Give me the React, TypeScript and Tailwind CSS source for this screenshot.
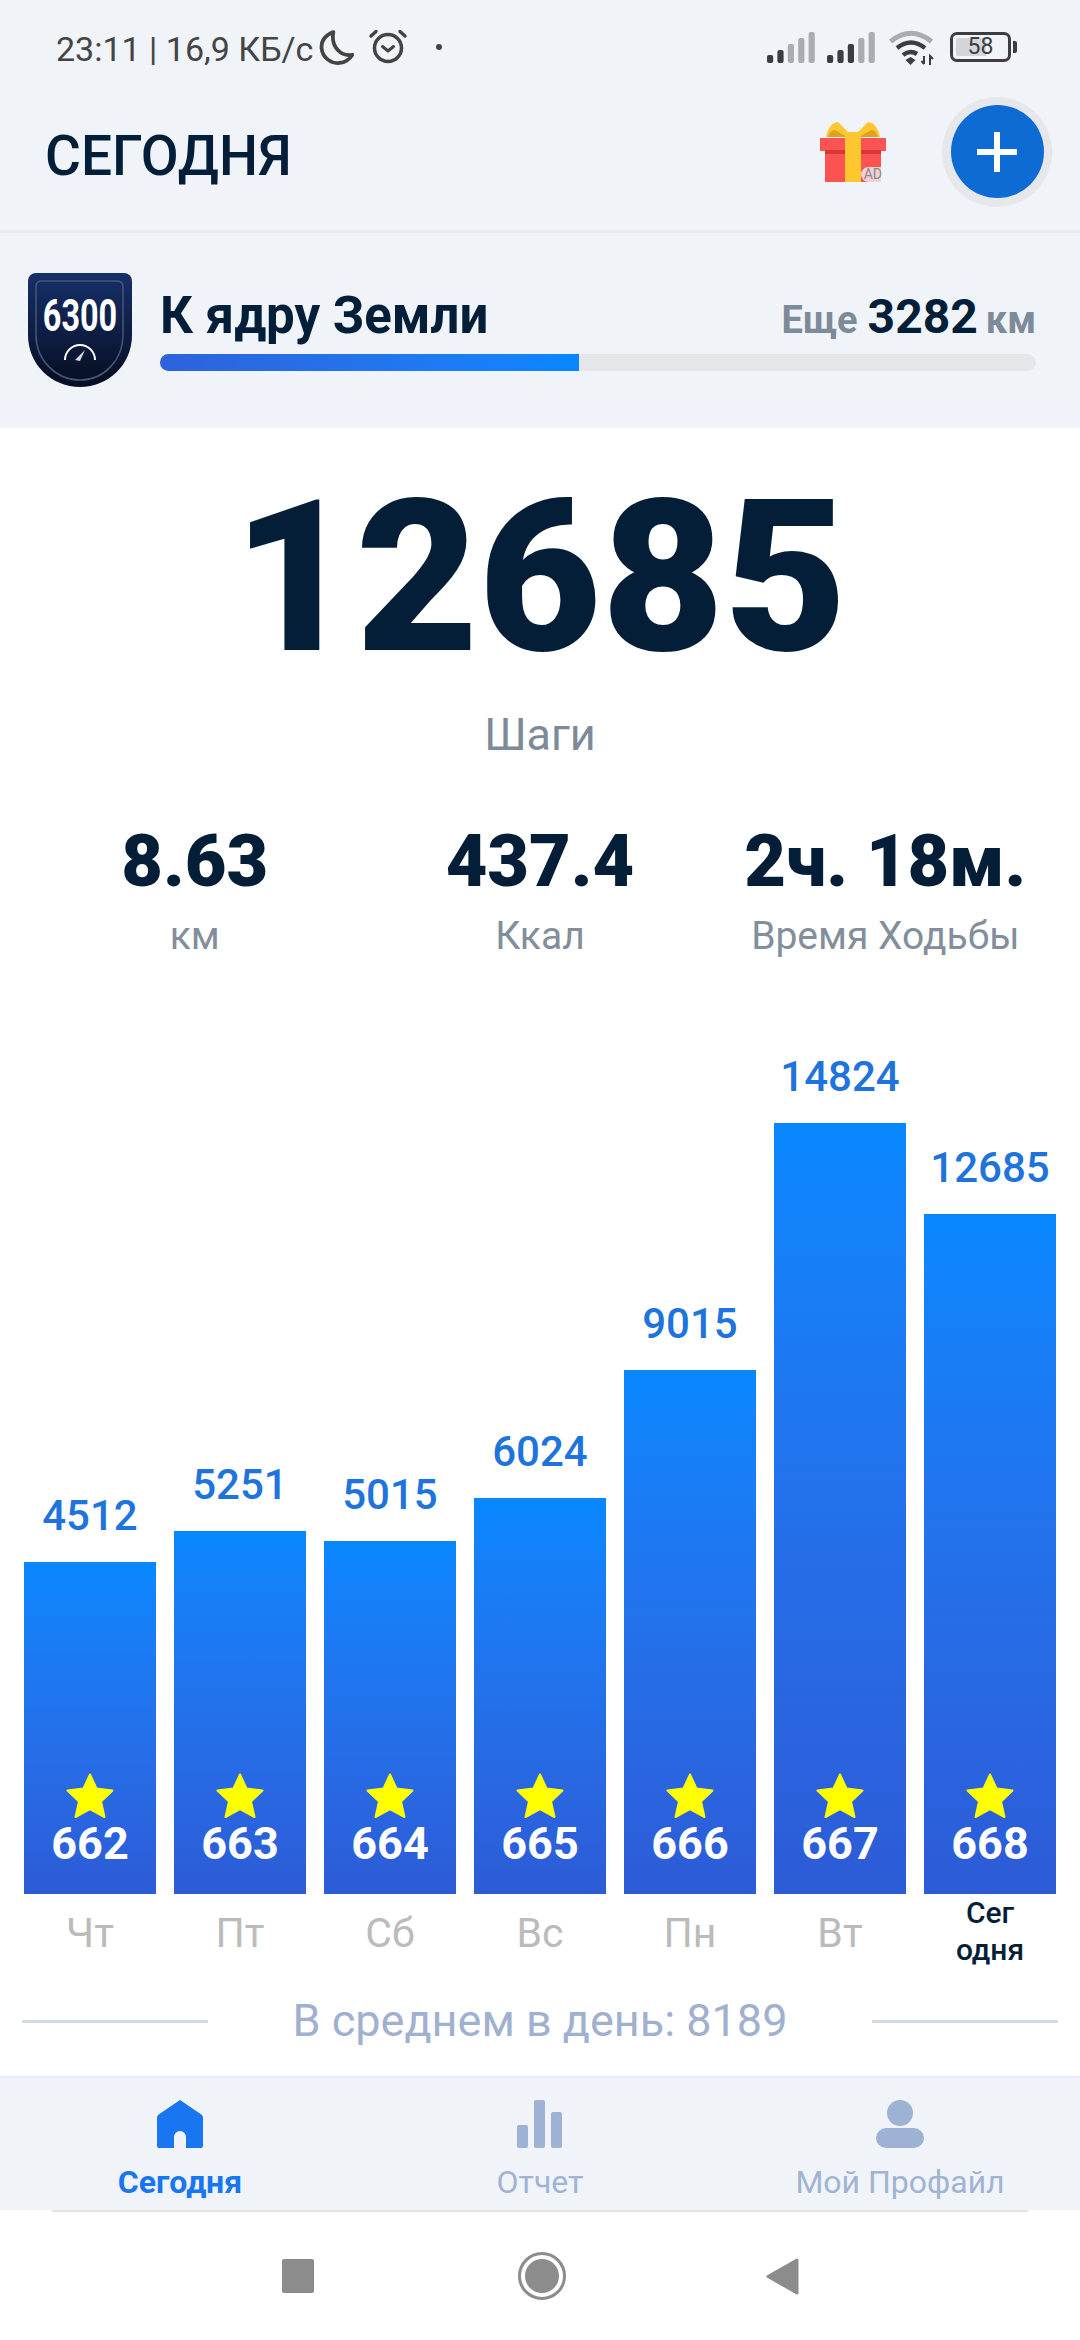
const days = [
  { value: 4512, height: 332, star: 662, day: "Чт" },
  { value: 5251, height: 363, star: 663, day: "Пт" },
  { value: 5015, height: 353, star: 664, day: "Сб" },
  { value: 6024, height: 396, star: 665, day: "Вс" },
  { value: 9015, height: 524, star: 666, day: "Пн" },
  { value: 14824, height: 771, star: 667, day: "Вт" },
  { value: 12685, height: 680, star: 668, day: "Сег одня", today: true },
];

const stats = [
  { value: "8.63", label: "км" },
  { value: "437.4", label: "Ккал" },
  { value: "2ч. 18м.", label: "Время Ходьбы" },
];

function Signal({ dark }: { dark: number }) {
  const heights = [8, 13, 19, 25, 31];
  return (
    <svg width="48" height="31" viewBox="0 0 48 31">
      {heights.map((h, i) => (
        <rect key={i} x={i * 10.4} y={31 - h} width="6.2" height={h} rx="2" fill={i < dark ? "#3b3d40" : "#a9acb0"} />
      ))}
    </svg>
  );
}

function StatusBar() {
  return (
    <div className="h-[92px] flex justify-between pl-[56px] pr-[69px] pt-[29px] text-[#444]">
      <div className="flex items-start">
        <span className="text-[34px] leading-[40px] w-[263px] whitespace-nowrap">23:11 | 16,9 КБ/с</span>
        <svg width="35" height="35" viewBox="0 0 34 34" fill="none" className="mt-[1px]">
          <path d="M14 2C6 5 2 11 2.500 18C3.500 27 12 33 20 32C25 31.500 30 28 32.500 24C22 26 11 17 14 2Z" stroke="#444" strokeWidth="3.600" strokeLinejoin="round" />
        </svg>
        <svg width="40" height="36" viewBox="0 0 40 36" fill="none" className="ml-[14px] -mt-[1px]">
          <circle cx="20" cy="20" r="13.500" stroke="#444" strokeWidth="3.500" />
          <path d="M14.500 18.500L20 23L25.500 18.500" stroke="#444" strokeWidth="3" strokeLinecap="round" strokeLinejoin="round" />
          <path d="M3 8L8 3.500M37 8L32 3.500" stroke="#444" strokeWidth="3.500" strokeLinecap="round" />
        </svg>
        <div className="w-[6px] h-[6px] rounded-full bg-[#444] ml-[28px] mt-[15px]" />
      </div>
      <div className="flex items-start pt-[3px]">
        <Signal dark={2} />
        <div className="ml-[12px]">
          <Signal dark={3} />
        </div>
        <svg width="46" height="36" viewBox="0 0 46 36" fill="none" className="ml-[13px] -mt-[2px]">
          <path d="M2.500 11.500Q23 -5 43.500 11.500" stroke="#a9acb0" strokeWidth="5" />
          <path d="M9 18Q23 7 37 18" stroke="#3b3d40" strokeWidth="4.500" />
          <path d="M15 25Q22 19.500 29 24" stroke="#3b3d40" strokeWidth="4.500" />
          <path d="M17.500 30L22.500 27L27.500 30L22.500 35Z" fill="#3b3d40" />
          <path d="M36 26V34M33.500 31L36 34M42 35V26L45 29" stroke="#3b3d40" strokeWidth="2" />
        </svg>
        <div className="ml-[16px] w-[61px] h-[30px] rounded-[7px] border-[3px] border-[#3b3d40] relative flex items-center justify-center">
          <div className="absolute left-[3px] top-[3px] bottom-[3px] w-[30px] bg-[#d3d5d8] rounded-l-[2px]" />
          <span className="relative text-[23px] leading-[22px] text-[#3b3d40]">58</span>
          <div className="absolute -right-[9px] top-[6px] w-[4px] h-[12px] rounded-r-[2px] bg-[#3b3d40]" />
        </div>
      </div>
    </div>
  );
}

function Gift() {
  return (
    <div className="relative w-[66px] h-[61px]">
      <svg width="66" height="61" viewBox="0 0 66 61">
        <path d="M33 16L18 1Q9 2 6 16Z" fill="#fcc72f" />
        <path d="M33 16L48 1Q57 2 60 16Z" fill="#fcc72f" />
        <path d="M8 16Q10 9 15 9L27 16Z" fill="#e39f1e" />
        <path d="M58 16Q56 9 51 9L39 16Z" fill="#e39f1e" />
        <rect x="5" y="29" width="56" height="32" fill="#fb5252" />
        <rect x="0" y="17" width="66" height="13" fill="#fb5252" />
        <rect x="5" y="29" width="56" height="4" fill="#d93636" />
        <rect x="25" y="11" width="16" height="50" fill="#fcc72f" />
      </svg>
      <span className="absolute right-[4px] bottom-0 pl-[3px] rounded-l-full bg-[#f0f3f7]/80 text-[14px] leading-[15px] text-[#888]">AD</span>
    </div>
  );
}

function Header() {
  return (
    <div className="h-[141px] flex items-center justify-between pl-[45px] pr-[28px] pb-[19px] border-b-[3px] border-[#e9ebef]">
      <h1 className="text-[55px] leading-[64px] font-medium text-[#021e38] mt-[8px]">СЕГОДНЯ</h1>
      <div className="flex items-center">
        <Gift />
        <div className="ml-[56px] w-[110px] h-[110px] rounded-full bg-[#e5e7eb] flex items-center justify-center">
          <div className="w-[93px] h-[93px] rounded-full bg-[#0e6bd3] flex items-center justify-center">
            <svg width="40" height="40" viewBox="0 0 40 40">
              <path d="M20 0V40M0 20H40" stroke="#fff" strokeWidth="6" />
            </svg>
          </div>
        </div>
      </div>
    </div>
  );
}

function Badge() {
  return (
    <div className="relative w-[104px] h-[114px] shrink-0">
      <svg width="104" height="114" viewBox="0 0 104 114">
        <defs>
          <linearGradient id="shield" x1="0" y1="0" x2="0" y2="1">
            <stop offset="0" stopColor="#16306a" />
            <stop offset="1" stopColor="#060d20" />
          </linearGradient>
        </defs>
        <path d="M8 0H96a8 8 0 0 1 8 8V62C104 92 80 114 52 114C24 114 0 92 0 62V8a8 8 0 0 1 8-8Z" fill="url(#shield)" />
        <path d="M14 8H90a5 5 0 0 1 5 5V62C95 87 76 107 52 107C28 107 8 87 8 62V13a5 5 0 0 1 6-5Z" fill="none" stroke="#4b5675" strokeWidth="1.500" />
        <path d="M37 87A15 15 0 0 1 67 87" fill="none" stroke="#fff" strokeWidth="2" />
        <path d="M47 87L57 77L52 88Z" fill="#d8dbe4" />
      </svg>
      <span className="absolute inset-x-0 top-[16px] text-center text-[45px] leading-[53px] font-bold text-white scale-x-[0.72]">6300</span>
    </div>
  );
}

function Progress() {
  return (
    <div className="h-[195px] flex pl-[28px] pr-[44px] pt-[40px]">
      <Badge />
      <div className="flex-1 ml-[28px]">
        <div className="h-[81px] flex justify-between items-baseline pt-[14px] font-bold">
          <span className="text-[51px] leading-[58px] text-[#021e38]">К ядру Земли</span>
          <span className="flex items-baseline text-[38px] leading-[58px] text-[#7d8a99] whitespace-nowrap">
            <span>Еще</span>
            <span className="text-[48px] text-[#021e38] ml-[10px] mr-[8px]">3282</span>
            <span>км</span>
          </span>
        </div>
        <div className="h-[17px] rounded-full bg-[#e4e6ea] overflow-hidden">
          <div className="h-full w-[419px] bg-linear-to-r from-[#2d62db] to-[#0787ff]" />
        </div>
      </div>
    </div>
  );
}

function Star() {
  return (
    <svg width="48" height="46" viewBox="0 0 48 46">
      <path d="M24 1.500L30.500 15.500L46.500 17.500L35 28.500L38.500 44L24 36L9.500 44L13 28.500L1.500 17.500L17.500 15.500Z" fill="#ffff00" stroke="#ffff00" strokeWidth="2" strokeLinejoin="round" />
    </svg>
  );
}

function Chart() {
  return (
    <div className="h-[1037px] grid grid-cols-7 gap-[18px] px-[24px]">
      {days.map((d) => (
        <div key={d.star} className="flex flex-col justify-end items-center">
          <span className="text-[42px] leading-[50px] font-medium text-[#1e74dc] mb-[21px]">{d.value}</span>
          <div
            className="w-full flex flex-col items-center justify-end pb-[25px] bg-linear-to-b from-[#0787ff] to-[#2d5bd6]"
            style={{ height: d.height }}
          >
            <Star />
            <span className="text-[45px] leading-[50px] font-bold text-white">{d.star}</span>
          </div>
          <div className="h-[102px] text-center">
            {d.today ? (
              <p className="w-[90px] text-[30px] leading-[37px] font-medium text-[#021e38]">{d.day}</p>
            ) : (
              <p className="pt-[15px] text-[41px] leading-[48px] text-[#bbbbbb]">{d.day}</p>
            )}
          </div>
        </div>
      ))}
    </div>
  );
}

function Average() {
  return (
    <div className="flex items-center justify-between px-[22px] h-[50px]">
      <div className="w-[186px] h-[3px] bg-[#d0d9e8]" />
      <span className="text-[45px] leading-[50px] text-[#a0b0cf] whitespace-nowrap">В среднем в день: 8189</span>
      <div className="w-[186px] h-[3px] bg-[#d0d9e8]" />
    </div>
  );
}

function TabBar() {
  return (
    <div className="h-[134px] grid grid-cols-3 bg-[#f0f3f7] border-t-[2px] border-[#e6eaf2] pt-[22px] text-center text-[32px] leading-[37px] text-[#a0b3d3]">
      <div className="flex flex-col items-center gap-[16px]">
        <svg width="46" height="48" viewBox="0 0 46 48">
          <path d="M23 0L45 15Q46 16 46 18V46Q46 48 44 48H29V37a6 6 0 0 0 -12 0V48H2Q0 48 0 46V18Q0 16 1 15Z" fill="#1877f0" />
        </svg>
        <span className="font-bold text-[#1877f0]">Сегодня</span>
      </div>
      <div className="flex flex-col items-center gap-[16px]">
        <svg width="46" height="48" viewBox="0 0 46 48" fill="#9db2d5">
          <rect x="0" y="25" width="11" height="23" rx="2" />
          <rect x="17" y="0" width="11" height="48" rx="2" />
          <rect x="34" y="12" width="11" height="36" rx="2" />
        </svg>
        <span>Отчет</span>
      </div>
      <div className="flex flex-col items-center gap-[16px]">
        <svg width="48" height="48" viewBox="0 0 48 48" fill="#9db2d5">
          <circle cx="24" cy="13" r="13" />
          <rect x="0" y="28" width="48" height="20" rx="10" />
        </svg>
        <span>Мой Профайл</span>
      </div>
    </div>
  );
}

function SystemNav() {
  return (
    <div className="h-[130px] bg-white">
      <div className="h-[2px] mx-[52px] bg-[#e2e2e2]" />
      <div className="h-[128px] flex items-center justify-center">
        <div className="w-[32px] h-[34px] rounded-[2px] bg-[#8c8c8c]" />
        <div className="ml-[204px] w-[48px] h-[48px] rounded-full border-[3px] border-[#8c8c8c] flex items-center justify-center">
          <div className="w-[34px] h-[34px] rounded-full bg-[#8c8c8c]" />
        </div>
        <svg width="33" height="37" viewBox="0 0 33 37" className="ml-[200px]">
          <path d="M31 2V35L2 18.500Z" fill="#8c8c8c" stroke="#8c8c8c" strokeWidth="3" strokeLinejoin="round" />
        </svg>
      </div>
    </div>
  );
}

export default function App() {
  return (
    <div className="h-[2340px] flex flex-col bg-white overflow-hidden font-[family-name:Roboto,sans-serif]">
      <div className="bg-[#f0f3f7]">
        <StatusBar />
        <Header />
        <Progress />
      </div>
      <main className="flex-1 text-center">
        <div className="pt-[44px] text-[212px] leading-[212px] font-black text-[#041e37]">12685</div>
        <div className="mt-[24px] text-[45px] leading-[54px] text-[#7d8a99]">Шаги</div>
        <div className="mt-[60px] grid grid-cols-3 px-[22px]">
          {stats.map((s) => (
            <div key={s.label}>
              <div className="text-[72px] leading-[80px] font-black text-[#041e37] whitespace-nowrap">{s.value}</div>
              <div className="mt-[11px] text-[39px] leading-[46px] text-[#828e9b] whitespace-nowrap">{s.label}</div>
            </div>
          ))}
        </div>
        <Chart />
        <Average />
      </main>
      <TabBar />
      <SystemNav />
    </div>
  );
}
